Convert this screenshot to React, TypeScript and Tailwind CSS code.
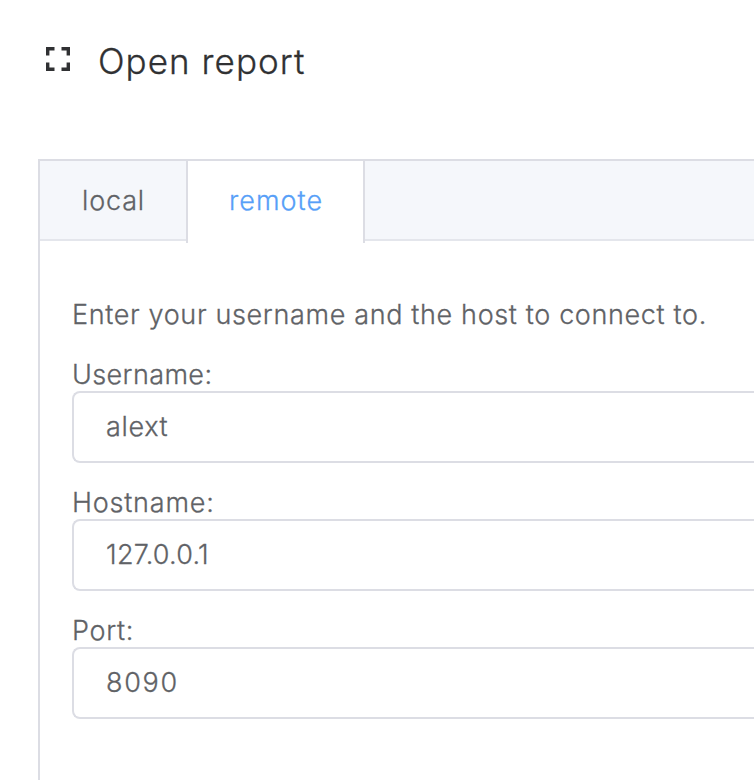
import React from "react";

type Field = { label: string; value: string; spacing: string; valueSpacing: string };

const fields: Field[] = [
  { label: "Username:", value: "alext", spacing: "tracking-[0.38px]", valueSpacing: "tracking-[0.65px]" },
  { label: "Hostname:", value: "127.0.0.1", spacing: "tracking-[0.78px]", valueSpacing: "tracking-[0.25px]" },
  { label: "Port:", value: "8090", spacing: "tracking-[0.7px]", valueSpacing: "tracking-[1.7px]" },
];

function CornersIcon() {
  return (
    <svg width="24" height="24" viewBox="0 0 24 24" fill="none" stroke="#303133" strokeWidth="3.4">
      <path d="M1.7 8.5V1.7H8.5M15.5 1.7H22.3V8.5M22.3 15.5V22.3H15.5M8.5 22.3H1.7V15.5" />
    </svg>
  );
}

export default function App() {
  return (
    <main className="flex h-[780px] w-full flex-col overflow-hidden bg-white pl-[38px] font-['Inter',sans-serif] text-[27px] font-light text-[#606266] [-webkit-text-stroke:0.28px_currentColor]">
      <header className="flex h-[159px] shrink-0 items-start pl-2 pt-[38px] text-[#303133]">
        <span className="mt-[9px]">
          <CornersIcon />
        </span>
        <h1 className="ml-[28px] whitespace-nowrap text-[35px] leading-[47px] tracking-[1.04px]">Open report</h1>
      </header>
      <section className="flex flex-1 flex-col border-l-2 border-t-2 border-[#dcdde4]">
        <nav className="flex h-[80px] shrink-0 border-b-2 border-[#e4e6ec] bg-[#f5f7fb] leading-[78px]">
          <button className="w-[146px] pl-px pt-px text-center tracking-[0.8px]">local</button>
          <button className="h-[82px] w-[179px] border-x-2 border-[#dcdde4] bg-white pb-[2px] pl-px text-center tracking-[1.05px] text-[#579ff8]">
            remote
          </button>
        </nav>
        <div className="flex flex-col pl-8 pt-[56px]">
          <p className="whitespace-nowrap leading-[36px] tracking-[0.64px]">Enter your username and the host to connect to.</p>
          <form className="mt-[26px] flex flex-col gap-6">
            {fields.map((f) => (
              <label key={f.label} className="flex flex-col">
                <span className={"h-[32px] leading-[32px] " + f.spacing}>{f.label}</span>
                <input
                  readOnly
                  value={f.value}
                  className={"h-[72px] w-full rounded-l-[8px] border-2 border-r-0 border-[#dcdde4] bg-white pb-[2px] pl-8 outline-none " + f.valueSpacing}
                />
              </label>
            ))}
          </form>
        </div>
      </section>
    </main>
  );
}
